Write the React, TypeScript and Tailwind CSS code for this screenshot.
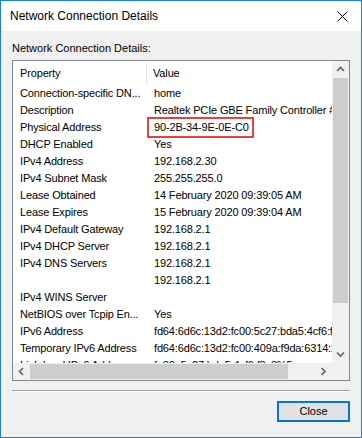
const rows: [string, string][] = [
	['Connection-specific DN...', 'home'],
	['Description', 'Realtek PCIe GBE Family Controller #2'],
	['Physical Address', '90-2B-34-9E-0E-C0'],
	['DHCP Enabled', 'Yes'],
	['IPv4 Address', '192.168.2.30'],
	['IPv4 Subnet Mask', '255.255.255.0'],
	['Lease Obtained', '14 February 2020 09:39:05 AM'],
	['Lease Expires', '15 February 2020 09:39:04 AM'],
	['IPv4 Default Gateway', '192.168.2.1'],
	['IPv4 DHCP Server', '192.168.2.1'],
	['IPv4 DNS Servers', '192.168.2.1'],
	['', '192.168.2.1'],
	['IPv4 WINS Server', ''],
	['NetBIOS over Tcpip En...', 'Yes'],
	['IPv6 Address', 'fd64:6d6c:13d2:fc00:5c27:bda5:4cf6:f8c3'],
	['Temporary IPv6 Address', 'fd64:6d6c:13d2:fc00:409a:f9da:6314:2b71'],
	['Link-local IPv6 Address', 'fe80::5c27:bda5:4cf6:f8c3%5'],
];

function Chevron({ dir }: { dir: 'up' | 'down' | 'left' | 'right' }) {
	const d = {
		up: 'M1 5 L4.5 1.5 L8 5',
		down: 'M1 1.5 L4.5 5 L8 1.5',
		left: 'M5 1 L1.5 4.5 L5 8',
		right: 'M1.5 1 L5 4.5 L1.5 8',
	}[dir];
	const vertical = dir === 'up' || dir === 'down';
	return (
		<svg width={vertical ? 9 : 7} height={vertical ? 7 : 9} viewBox={vertical ? '0 0 9 7' : '0 0 7 9'}>
			<path d={d} fill="none" stroke="#606060" strokeWidth="1.6" />
		</svg>
	);
}

export default function App() {
	return (
		<div
			className="w-[362px] h-[438px] border border-[#1883d7] flex flex-col text-black bg-[#f0f0f0]"
			style={{ fontFamily: '"Liberation Sans", Arial, sans-serif' }}
		>
			{/* title bar */}
			<div className="h-[30px] bg-white flex items-center justify-between pl-[9px] pr-[9px] shrink-0">
				<span className="text-[12px] leading-[14px]">Network Connection Details</span>
				<svg width="11" height="11" viewBox="0 0 11 11" className="mr-[4px]">
					<path d="M0.5 0.5 L10.5 10.5 M10.5 0.5 L0.5 10.5" stroke="#000" strokeWidth="1" />
				</svg>
			</div>

			<div className="flex-1 flex flex-col px-[11px] pt-[11px] text-[11px]">
				<div className="leading-[13px] h-[13px]">Network Connection Details:</div>

				{/* list box */}
				<div className="mt-[5px] h-[321px] border border-[#828790] bg-white flex flex-col">
					<div className="flex h-[302px]">
						<div className="w-[319px] overflow-hidden tracking-[-0.15px]">
							<div className="flex h-[23px] items-center pt-[1px]">
								<div className="w-[134px] shrink-0 h-full flex items-center pl-[7px] border-r border-[#e5e5e5]">Property</div>
								<div className="pl-[6px]">Value</div>
							</div>
							{rows.map(([k, v], i) => (
								<div key={i} className="relative flex h-[17px] items-center whitespace-nowrap pt-[2px]">
									<div className="w-[134px] shrink-0 pl-[7px] overflow-hidden">{k}</div>
									<div className="pl-[7px]">{v}</div>
									{i === 2 && (
										<div className="absolute left-[134px] top-[-1px] w-[107px] h-[21px] border-2 border-[#e8413f]" />
									)}
								</div>
							))}
						</div>
						{/* vertical scrollbar */}
						<div className="w-[17px] bg-[#f0f0f0] flex flex-col">
							<div className="h-[17px] flex items-center justify-center">
								<Chevron dir="up" />
							</div>
							<div className="h-[225px] mx-[1px] bg-[#cdcdcd]" />
							<div className="flex-1" />
							<div className="h-[17px] flex items-center justify-center">
								<Chevron dir="down" />
							</div>
						</div>
					</div>
					{/* horizontal scrollbar */}
					<div className="flex h-[17px] bg-[#f0f0f0]">
						<div className="w-[17px] flex items-center justify-center">
							<Chevron dir="left" />
						</div>
						<div className="w-[258px] my-[1px] bg-[#cdcdcd]" />
						<div className="flex-1" />
						<div className="w-[17px] flex items-center justify-center">
							<Chevron dir="right" />
						</div>
						<div className="w-[17px]" />
					</div>
				</div>

				<div className="mt-[9px] h-[1px] bg-[#a0a0a0]" />
				<div className="h-[1px] bg-white" />

				<div className="mt-[9px] flex justify-end">
					<button className="w-[73px] h-[21px] border-2 border-[#0078d7] bg-[#e1e1e1] text-[11px] leading-[17px] flex items-center justify-center">
						Close
					</button>
				</div>
			</div>
		</div>
	);
}
